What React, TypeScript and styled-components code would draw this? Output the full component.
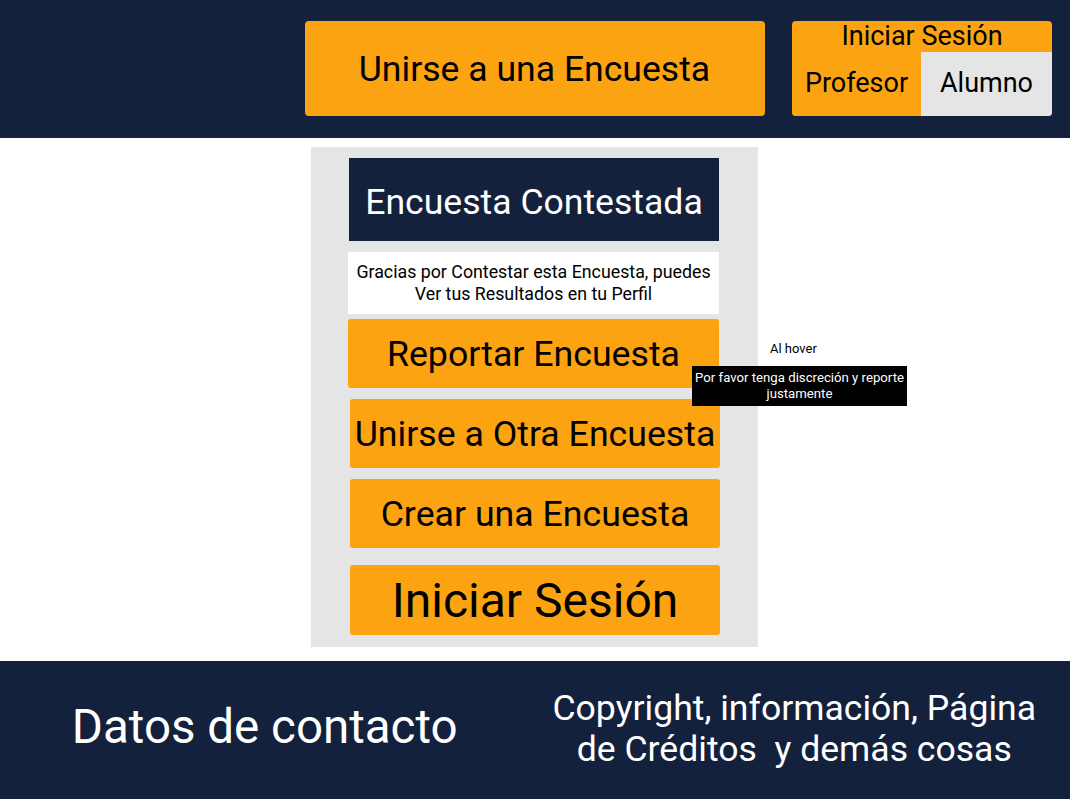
import styled, { createGlobalStyle } from 'styled-components'

const GlobalStyle = createGlobalStyle`
  body {
    margin: 0;
    font-family: Roboto, "Liberation Sans", sans-serif;
    background: #ffffff;
  }
`

const navy = '#14213d'
const orange = '#fca311'
const grey = '#e5e5e5'

const Header = styled.header`
  background: ${navy};
  height: 138px;
  box-sizing: border-box;
  padding: 21px 18px 0 17px;
  display: grid;
  grid-template-columns: 1fr 460px 1fr;
  align-items: start;
`

const JoinButton = styled.button`
  grid-column: 2;
  height: 95px;
  background: ${orange};
  border: none;
  border-radius: 4px;
  font-family: Roboto, sans-serif;
  font-size: 35.6px;
  color: #000;
  padding: 0;
`

const LoginBox = styled.div`
  grid-column: 3;
  justify-self: end;
  width: 260px;
  height: 95px;
  border-radius: 4px;
  overflow: hidden;
  background: ${orange};
  display: grid;
  grid-template-columns: 129px 131px;
  grid-template-rows: 31px 64px;
`

const LoginTitle = styled.div`
  grid-column: 1 / span 2;
  font-size: 27px;
  line-height: 31px;
  text-align: center;
`

interface OptionProps {
  active?: boolean
}

const LoginOption = styled.div<OptionProps>`
  display: flex;
  align-items: center;
  justify-content: center;
  font-size: 27px;
  padding-bottom: 3px;
  background: ${props => (props.active ? grey : orange)};
`

const Main = styled.main`
  display: flex;
  justify-content: center;
  padding: 9px 1px 14px 0;
`

const Panel = styled.section`
  width: 447px;
  height: 500px;
  box-sizing: border-box;
  background: ${grey};
  padding: 11px 0 0 37px;
  display: flex;
  flex-direction: column;
`

const TitleBox = styled.div`
  width: 370px;
  height: 83px;
  margin-left: 1px;
  background: ${navy};
  color: #fff;
  font-size: 35.6px;
  display: flex;
  align-items: center;
  justify-content: center;
  padding-top: 4px;
  box-sizing: border-box;
`

const Notice = styled.div`
  width: 371px;
  height: 62px;
  margin-top: 11px;
  background: #fff;
  font-size: 17.8px;
  line-height: 22px;
  display: flex;
  align-items: center;
  justify-content: center;
  text-align: center;
`

interface ActionProps {
  gap: number
  shift?: number
  big?: boolean
}

const ActionButton = styled.div<ActionProps>`
  position: relative;
  width: ${props => (props.shift ? 370 : 371)}px;
  height: ${props => (props.big ? 70 : 69)}px;
  margin-top: ${props => props.gap}px;
  margin-left: ${props => props.shift ?? 0}px;
  background: ${orange};
  border-radius: 3px;
  font-size: ${props => (props.big ? 48 : 35.7)}px;
  display: flex;
  align-items: center;
  justify-content: center;
  white-space: nowrap;
`

const HoverLabel = styled.span`
  position: absolute;
  left: 422px;
  top: 22px;
  font-size: 13px;
  color: #000;
`

const Tooltip = styled.div`
  position: absolute;
  left: 344px;
  top: 47px;
  width: 215px;
  height: 40px;
  box-sizing: border-box;
  background: #000;
  color: #fff;
  font-size: 13.2px;
  line-height: 16px;
  text-align: center;
  padding-top: 4px;
  white-space: normal;
  z-index: 2;
`

const Footer = styled.footer`
  background: ${navy};
  height: 138px;
  padding-right: 11px;
  display: grid;
  grid-template-columns: 1fr 1fr;
  align-items: center;
  color: #fff;
  text-align: center;
`

const ContactText = styled.div`
  font-size: 47.5px;
  padding-bottom: 6px;
`

const CreditsText = styled.div`
  font-size: 35.6px;
  line-height: 41px;
  padding-bottom: 2px;
`

export default function App() {
  return (
    <>
      <GlobalStyle />
      <Header>
        <JoinButton>Unirse a una Encuesta</JoinButton>
        <LoginBox>
          <LoginTitle>Iniciar Sesión</LoginTitle>
          <LoginOption>Profesor</LoginOption>
          <LoginOption active>Alumno</LoginOption>
        </LoginBox>
      </Header>
      <Main>
        <Panel>
          <TitleBox>Encuesta Contestada</TitleBox>
          <Notice>
            Gracias por Contestar esta Encuesta, puedes
            <br />
            Ver tus Resultados en tu Perfil
          </Notice>
          <ActionButton gap={5}>
            Reportar Encuesta
            <HoverLabel>Al hover</HoverLabel>
            <Tooltip>Por favor tenga discreción y reporte justamente</Tooltip>
          </ActionButton>
          <ActionButton gap={11} shift={2}>Unirse a Otra Encuesta</ActionButton>
          <ActionButton gap={11} shift={2}>Crear una Encuesta</ActionButton>
          <ActionButton gap={17} shift={2} big>Iniciar Sesión</ActionButton>
        </Panel>
      </Main>
      <Footer>
        <ContactText>Datos de contacto</ContactText>
        <CreditsText>
          Copyright, información, Página
          <br />
          de Créditos&nbsp; y demás cosas
        </CreditsText>
      </Footer>
    </>
  )
}
